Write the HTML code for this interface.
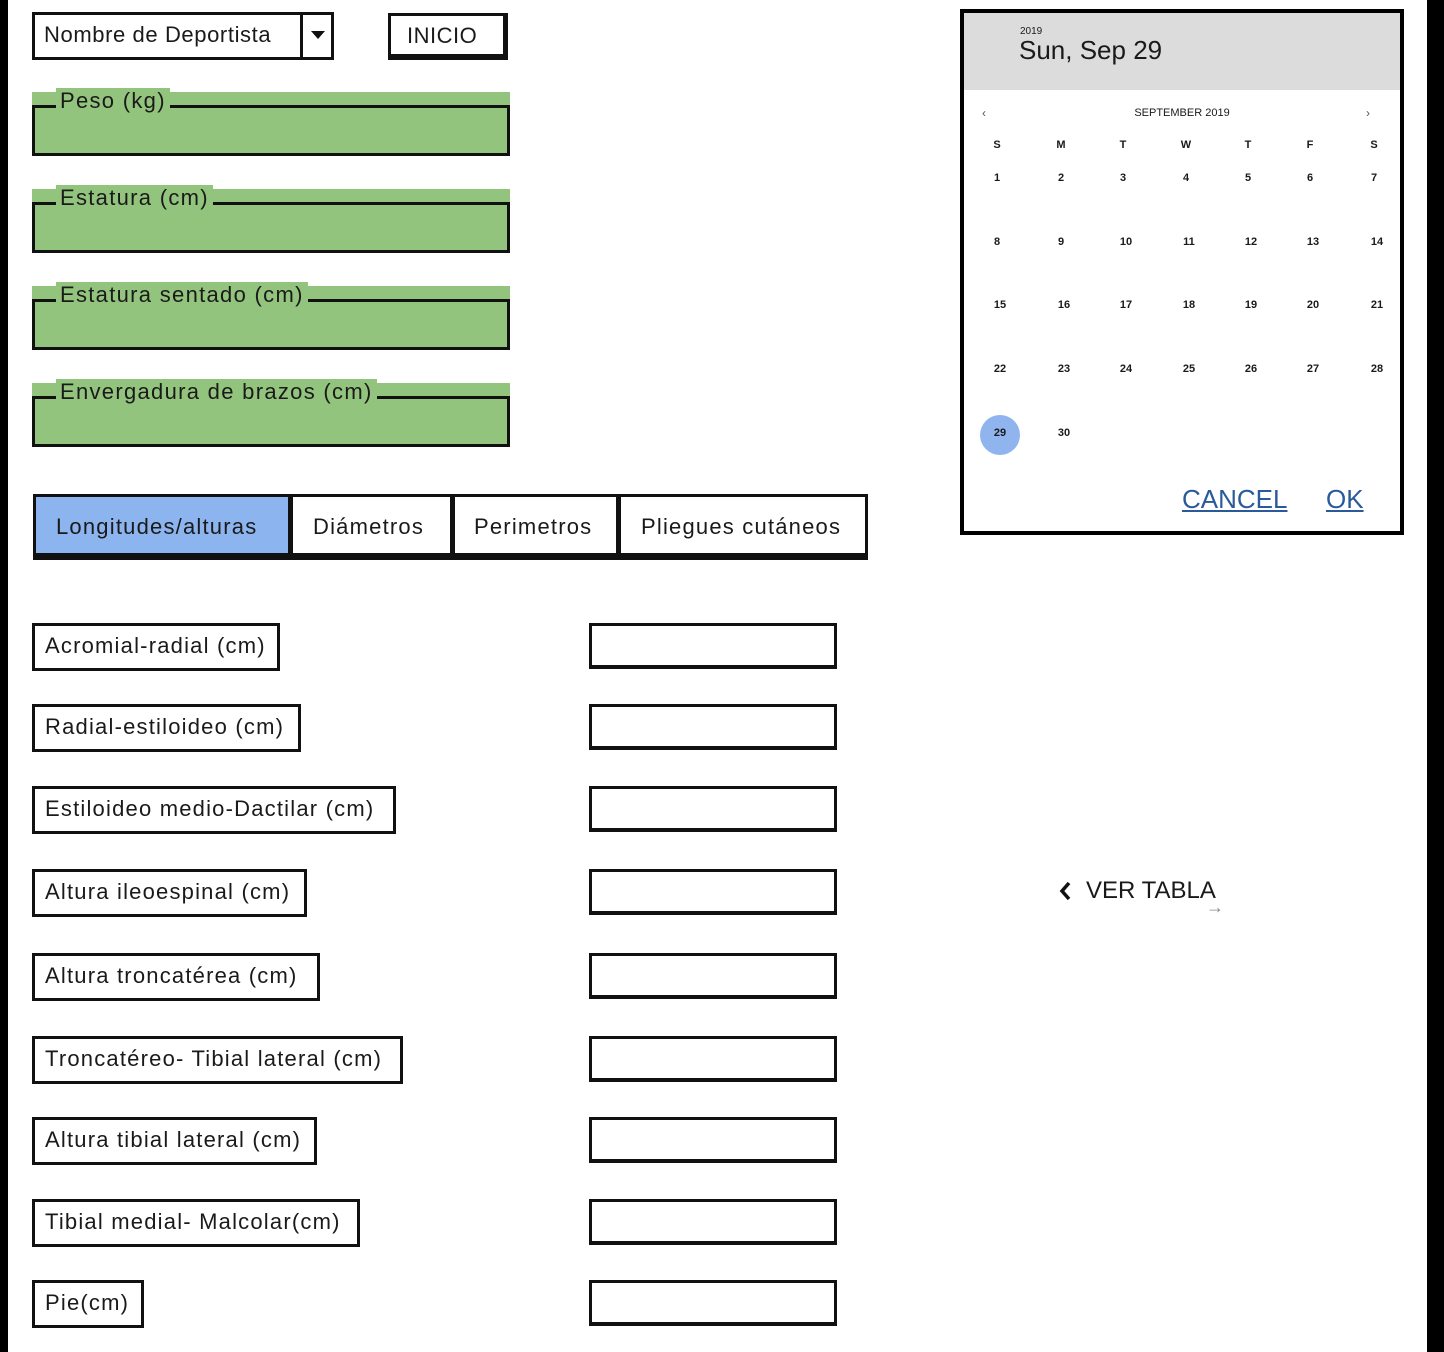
<!DOCTYPE html>
<html><head><meta charset="utf-8"><style>
*{margin:0;padding:0;box-sizing:border-box}
body{width:1444px;height:1352px;position:relative;background:#fff;font-family:"Liberation Sans",sans-serif;color:#1a1a1a;overflow:hidden}
.a{position:absolute}
.box{position:absolute;border:3px solid #111;background:#fff;font-size:22px;line-height:40px;padding-left:10px;white-space:nowrap;letter-spacing:1.2px}
.g{position:absolute;left:32px;width:478px;height:64px;background:#93c47d}
.g .in{position:absolute;left:0;top:13px;width:478px;height:51px;border:3px solid #111;border-top-width:3px}
.g .lb{position:absolute;left:24px;top:-4px;background:#93c47d;padding:0 4px;font-size:22px;letter-spacing:1.3px}
.in2{position:absolute;left:589px;width:248px;height:46px;border:3px solid #111;border-bottom-width:4px}
.cal{font-size:11px;font-weight:bold;text-align:center;width:40px}
</style></head><body>
<div class="a" style="left:0;top:0;width:8px;height:1352px;background:#000"></div>
<div class="a" style="left:1427px;top:0;width:17px;height:1352px;background:#000"></div>

<div class="box" style="left:32px;top:12px;width:302px;height:48px;padding-left:9px;letter-spacing:0.6px">Nombre de Deportista</div>
<div class="a" style="left:300px;top:14px;width:3px;height:44px;background:#111"></div>
<div class="a" style="left:311px;top:31px;border-left:7px solid transparent;border-right:7px solid transparent;border-top:8px solid #111"></div>
<div class="box" style="left:388px;top:13px;width:120px;height:47px;border-right-width:5px;border-bottom-width:6px;padding-left:16px;letter-spacing:0.5px">INICIO</div>

<div class="g" style="top:92px"><div class="in"></div><div class="lb">Peso (kg)</div></div>
<div class="g" style="top:189px"><div class="in"></div><div class="lb">Estatura (cm)</div></div>
<div class="g" style="top:286px"><div class="in"></div><div class="lb">Estatura sentado (cm)</div></div>
<div class="g" style="top:383px"><div class="in"></div><div class="lb">Envergadura de brazos (cm)</div></div>

<div class="box" style="left:33px;top:494px;width:258px;height:66px;background:#8cb4ef;line-height:60px;padding-left:20px;border-bottom-width:7px">Longitudes/alturas</div>
<div class="box" style="left:290px;top:494px;width:163px;height:66px;line-height:60px;padding-left:20px;border-bottom-width:7px">Diámetros</div>
<div class="box" style="left:452px;top:494px;width:167px;height:66px;line-height:60px;padding-left:19px;border-bottom-width:7px">Perimetros</div>
<div class="box" style="left:618px;top:494px;width:250px;height:66px;line-height:60px;padding-left:20px;border-bottom-width:7px">Pliegues cutáneos</div>

<div class="box" style="left:32px;top:623px;width:248px;height:48px">Acromial-radial (cm)</div>
<div class="box" style="left:32px;top:704px;width:269px;height:48px">Radial-estiloideo (cm)</div>
<div class="box" style="left:32px;top:786px;width:364px;height:48px">Estiloideo medio-Dactilar (cm)</div>
<div class="box" style="left:32px;top:869px;width:275px;height:48px">Altura ileoespinal (cm)</div>
<div class="box" style="left:32px;top:953px;width:288px;height:48px">Altura troncatérea (cm)</div>
<div class="box" style="left:32px;top:1036px;width:371px;height:48px">Troncatéreo- Tibial lateral (cm)</div>
<div class="box" style="left:32px;top:1117px;width:285px;height:48px">Altura tibial lateral (cm)</div>
<div class="box" style="left:32px;top:1199px;width:328px;height:48px">Tibial medial- Malcolar(cm)</div>
<div class="box" style="left:32px;top:1280px;width:112px;height:48px">Pie(cm)</div>

<div class="in2" style="top:623px"></div>
<div class="in2" style="top:704px"></div>
<div class="in2" style="top:786px"></div>
<div class="in2" style="top:869px"></div>
<div class="in2" style="top:953px"></div>
<div class="in2" style="top:1036px"></div>
<div class="in2" style="top:1117px"></div>
<div class="in2" style="top:1199px"></div>
<div class="in2" style="top:1280px"></div>

<div class="a" style="left:960px;top:9px;width:444px;height:526px;border:4px solid #000;background:#fff"></div>
<div class="a" style="left:964px;top:13px;width:436px;height:77px;background:#dcdcdc"></div>
<div class="a" style="left:1020px;top:26px;font-size:10px">2019</div>
<div class="a" style="left:1019px;top:35px;font-size:26px">Sun, Sep 29</div>
<div class="a" style="left:982px;top:106px;font-size:12px;color:#555">‹</div>
<div class="a" style="left:1366px;top:106px;font-size:12px;color:#555">›</div>
<div class="a" style="left:1082px;top:107px;width:200px;text-align:center;font-size:11px">SEPTEMBER 2019</div>
<div class="a" style="left:980px;top:415px;width:40px;height:40px;border-radius:50%;background:#8fb4ee"></div>
<div id="cal"></div>
<div class="a" style="left:1182px;top:484px;font-size:26px;color:#2a5a9a;text-decoration:underline">CANCEL</div>
<div class="a" style="left:1326px;top:484px;font-size:26px;color:#2a5a9a;text-decoration:underline">OK</div>

<svg class="a" style="left:1058px;top:881px" width="14" height="20" viewBox="0 0 14 20"><path d="M11 2 L4 10 L11 18" fill="none" stroke="#111" stroke-width="3.5"/></svg>
<div class="a" style="left:1086px;top:877px;font-size:24px">VER TABLA</div>
<div class="a" style="left:1206px;top:897px;font-size:18px;color:#888">→</div>

<script>
var xs=[997,1061,1123,1186,1248,1310,1374],c=document.getElementById('cal'),h='';
var hd=['S','M','T','W','T','F','S'];
hd.forEach(function(t,i){h+='<div class="a cal" style="left:'+(xs[i]-20)+'px;top:139px">'+t+'</div>'});
var ys=[172,236,299,363,427];
for(var d=1;d<=30;d++){var r=Math.floor((d-1)/7),col=(d-1)%7;h+='<div class="a cal" style="left:'+(xs[col]-20+(d>9?3:0))+'px;top:'+ys[r]+'px">'+d+'</div>'}
c.innerHTML=h;
</script>
</body></html>
